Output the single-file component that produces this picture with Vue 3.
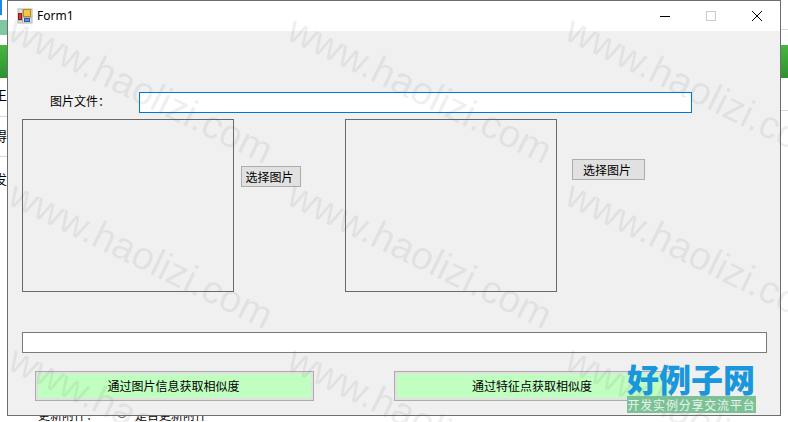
<template>
  <div class="page">
    <!-- bits of the page behind the form -->
    <div class="behind">
      <div class="behind-blue"></div>
      <div class="behind-strip"></div>
      <div class="behind-green"></div>
      <div class="behind-green right"></div>
      <div class="behind-line l1"></div>
      <div class="behind-line l2"></div>
      <div class="behind-line l3"></div>
      <div class="behind-line l4"></div>
      <span class="behind-text t1">王</span>
      <span class="behind-text t2">得</span>
      <span class="behind-text t3">发</span>
      <div class="behind-bottom">
        <span>更新附件：</span>
        <i class="radio"></i>
        <span>是否更新附件</span>
      </div>
    </div>

    <div class="window">
      <header class="titlebar">
        <svg class="app-icon" width="16" height="16" viewBox="0 0 16 16">
          <rect x="1" y="1" width="14" height="14" fill="#e2e2e2" stroke="#b4b4b4" />
          <path d="M5.5 1v14M1 5.5h5M1 12.5h5M6 9.5h9" stroke="#b4b4b4" fill="none" />
          <rect x="6.5" y="1.5" width="7" height="7" fill="#f7c63f" stroke="#b98a1f" />
          <rect x="1.5" y="5.5" width="3" height="6" fill="#d8332c" stroke="#8c1d18" />
          <rect x="7.5" y="10.5" width="5" height="3" fill="#5f95e0" stroke="#2c5aa0" />
        </svg>
        <span class="title">Form1</span>
        <div class="controls">
          <svg width="46" height="30" viewBox="0 0 46 30"><path d="M18 15.5h10" stroke="#000" fill="none" /></svg>
          <svg width="46" height="30" viewBox="0 0 46 30"><rect x="18.5" y="10.5" width="9" height="9" stroke="#ccc" fill="none" /></svg>
          <svg width="46" height="30" viewBox="0 0 46 30"><path d="M18 10l10 10M28 10L18 20" stroke="#000" fill="none" /></svg>
        </div>
      </header>

      <div class="body">
        <div class="file-row">
          <label class="file-label">图片文件：</label>
          <div class="file-box"><input class="file-input" type="text" /></div>
        </div>

        <div class="pictures">
          <div class="picture"></div>
          <div class="pick left-pick"><button class="btn">选择图片</button></div>
          <div class="picture"></div>
          <div class="pick right-pick"><button class="btn">选择图片</button></div>
        </div>

        <div class="progress"></div>

        <div class="actions">
          <button class="action first">通过图片信息获取相似度</button>
          <button class="action second">通过特征点获取相似度</button>
        </div>
      </div>
    </div>

    <div class="watermarks">
      <span
        v-for="(m, i) in marks"
        :key="i"
        class="mark"
        :style="{ left: m.x + 'px', top: m.y + 'px' }"
      >www.haolizi.com</span>
    </div>

    <div class="logo">
      <div class="logo-name">好例子网</div>
      <div class="logo-sub">开发实例分享交流平台</div>
    </div>
  </div>
</template>

<script setup>
const marks = []
for (const y of [7, 172, 337]) {
  for (const x of [21, 300, 578]) {
    marks.push({ x, y })
  }
}
</script>

<style>
html,
body {
  margin: 0;
  background: #fff;
  overflow: hidden;
}
</style>

<style scoped>
.page {
  position: relative;
  width: 788px;
  height: 422px;
  overflow: hidden;
  font-family: "Noto Sans CJK SC", "Liberation Sans", sans-serif;
  color: #000;
}

.behind-blue {
  position: absolute;
  left: 0;
  top: 0;
  width: 2px;
  height: 15px;
  background: #1e88e5;
}

.behind-strip {
  position: absolute;
  left: 0;
  top: 20px;
  width: 8px;
  height: 15px;
  background: #7fc8a0;
}

.behind-green {
  position: absolute;
  left: 0;
  top: 45px;
  width: 8px;
  height: 33px;
  background: linear-gradient(#46b83f, #2e9130);
}

.behind-green.right {
  left: 780px;
}

.behind-line {
  position: absolute;
  height: 1px;
  background: #d8d8d8;
}

.l1 { left: 0; top: 116px; width: 8px; }
.l2 { left: 0; top: 156px; width: 8px; }
.l3 { left: 780px; top: 29px; width: 8px; }
.l4 { left: 780px; top: 110px; width: 8px; }

.behind-text {
  position: absolute;
  font-size: 13px;
  line-height: 16px;
}

.t1 { top: 87px; left: -6px; }
.t2 { top: 128px; left: -6px; }
.t3 { top: 171px; left: -6px; }

.behind-bottom {
  position: absolute;
  left: 38px;
  top: 407px;
  display: flex;
  align-items: center;
  font-size: 12px;
  line-height: 16px;
}

.radio {
  width: 12px;
  height: 12px;
  margin: -6px 7px 0 18px;
  border: 1px solid #555;
  border-radius: 50%;
  box-sizing: border-box;
}

.window {
  position: absolute;
  left: 7px;
  top: 0;
  width: 774px;
  height: 416px;
  box-sizing: border-box;
  border: 1px solid #6e6e6e;
  background: #f0f0f0;
  display: flex;
  flex-direction: column;
}

.titlebar {
  height: 30px;
  flex: none;
  background: #fff;
  display: flex;
  align-items: center;
  padding-left: 9px;
}

.app-icon {
  flex: none;
}

.title {
  margin-left: 4px;
  padding-bottom: 2px;
  font-family: "Noto Sans", "Liberation Sans", sans-serif;
  font-size: 12px;
}

.controls {
  margin-left: auto;
  display: flex;
}

.controls svg {
  display: block;
}

.body {
  flex: 1;
  padding: 0 13px 0 14px;
  display: flex;
  flex-direction: column;
}

.file-row {
  display: flex;
  align-items: center;
  margin-top: 61px;
  height: 22px;
}

.file-label {
  width: 117px;
  padding: 0 0 5px 28px;
  box-sizing: border-box;
  font-size: 12px;
}

.file-box {
  width: 553px;
  height: 21px;
  margin-top: -1px;
  box-sizing: border-box;
  border: 1px solid #0078d7;
  background: #fff;
}

.file-input {
  display: block;
  width: 100%;
  height: 100%;
  box-sizing: border-box;
  border: 0;
  background: transparent;
  padding: 0;
  outline: none;
}

.pictures {
  display: flex;
  margin-top: 5px;
}

.picture {
  width: 212px;
  height: 173px;
  box-sizing: border-box;
  border: 1px solid #696969;
  flex: none;
}

.pick {
  flex: none;
}

.left-pick {
  width: 111px;
  padding: 47px 0 0 7px;
  box-sizing: border-box;
}

.right-pick {
  padding: 40px 0 0 15px;
}

.btn {
  display: block;
  width: 60px;
  height: 21px;
  padding: 0 3px 0 0;
  box-sizing: border-box;
  border: 1px solid #adadad;
  background: #e1e1e1;
  font-family: inherit;
  font-size: 12px;
  color: #000;
}

.right-pick .btn {
  width: 73px;
}

.progress {
  margin-top: 40px;
  width: 745px;
  height: 21px;
  box-sizing: border-box;
  border: 1px solid #7a7a7a;
  background: #fff;
}

.actions {
  display: flex;
  margin-top: 18px;
  padding-left: 13px;
}

.action {
  height: 30px;
  padding: 0 2px 2px 0;
  box-sizing: border-box;
  border: 1px solid #adadad;
  outline: 2px solid #e1e1e1;
  outline-offset: -3px;
  background: #c0ffc0;
  font-family: inherit;
  font-size: 12px;
  color: #000;
}

.first {
  width: 279px;
}

.second {
  width: 278px;
  margin-left: 80px;
}

/* watermark lies over everything */
.watermarks {
  position: absolute;
  inset: 0;
  pointer-events: none;
}

.mark {
  position: absolute;
  font-family: "Liberation Sans", sans-serif;
  font-size: 39px;
  line-height: 44px;
  color: rgba(90, 90, 90, 0.1);
  white-space: nowrap;
  transform-origin: 0 0;
  transform: rotate(26deg);
}

.logo {
  position: absolute;
  left: 627px;
  top: 360px;
  width: 129px;
}

.logo-name {
  font-family: "Noto Sans CJK SC", sans-serif;
  font-weight: 900;
  font-size: 32px;
  line-height: 36px;
  color: #1a96dc;
  white-space: nowrap;
}

.logo-sub {
  height: 17px;
  background: #7cc096;
  color: #e6f5ea;
  font-size: 12px;
  line-height: 17px;
  white-space: nowrap;
  text-align: center;
  letter-spacing: 0.8px;
}
</style>
